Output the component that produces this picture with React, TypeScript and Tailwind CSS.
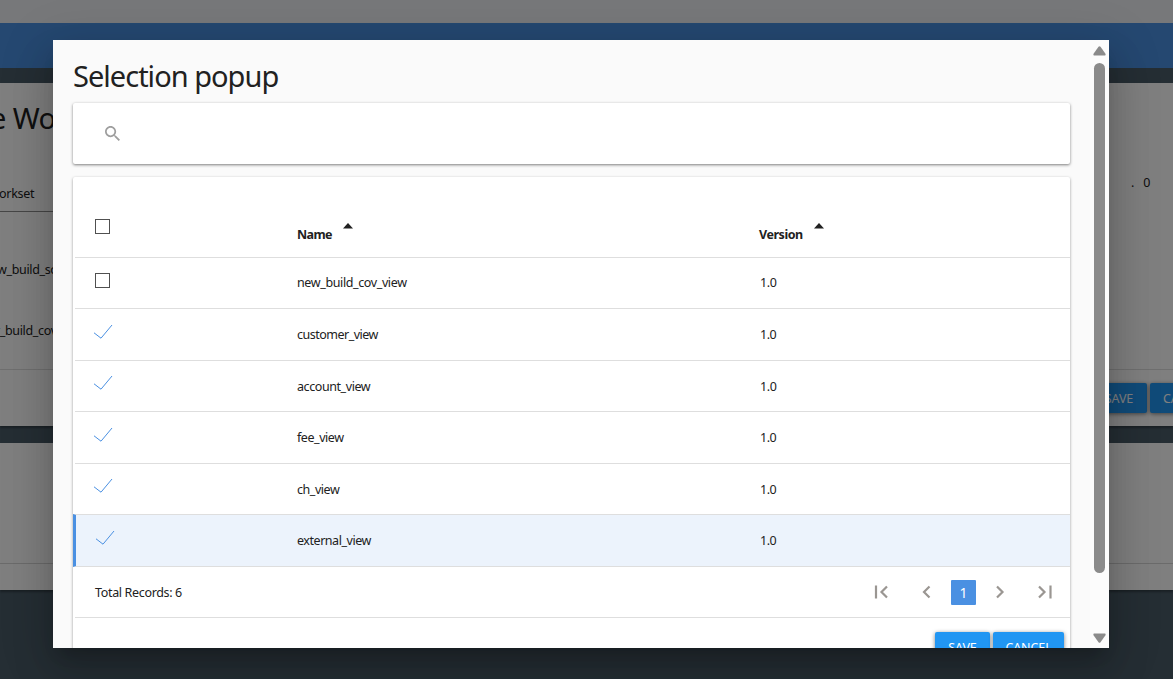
import React from "react";

type Row = { name: string; checked: boolean; height: string; text: string };

const rows: Row[] = [
  { name: "new_build_cov_view", checked: false, height: "h-[51px]", text: "tracking-[-0.38px]" },
  { name: "customer_view", checked: true, height: "h-[52px]", text: "pt-[2px] tracking-[-0.5px]" },
  { name: "account_view", checked: true, height: "h-[51px]", text: "pt-[2px] tracking-[-0.42px]" },
  { name: "fee_view", checked: true, height: "h-[52px]", text: "pt-[2px] tracking-[-0.45px]" },
  { name: "ch_view", checked: true, height: "h-[51px]", text: "pt-[2px] tracking-[-0.45px]" },
];

function CheckMark() {
  return (
    <svg width="20" height="16" viewBox="0 0 20 16" fill="none" stroke="#4a90e2" strokeWidth="1">
      <path d="M1 8.8 L8 14.2 L19 1" />
    </svg>
  );
}

function Box() {
  return <span className="block size-[15px] border border-[#505050]" />;
}

function SortArrow() {
  return (
    <svg width="10" height="6" viewBox="0 0 10 6" className="block" fill="#212121">
      <path d="M0 5.5 L5 0 L10 5.5Z" />
    </svg>
  );
}

function Background() {
  return (
    <div className="flex h-[679px] flex-col overflow-hidden bg-[#4a5c68]">
      <div className="h-[23px] shrink-0 bg-[#eff0f4]" />
      <div className="h-[45px] shrink-0 bg-[#4a90e2]" />
      <div className="mt-[15px] flex h-[343px] shrink-0 justify-between bg-white shadow-[0_2px_2px_rgba(0,0,0,0.3)]">
        <div className="w-[300px] whitespace-nowrap">
          <div className="-ml-[10px] h-[98px] pt-[14px] text-[29px] leading-[42px] tracking-[-0.6px]">e Wo</div>
          <div className="-ml-[1px] h-[31px] border-b border-[#8c8c8c] pt-[4px] leading-[18px] tracking-[-0.3px]">orkset</div>
          <div className="-ml-[3px] h-[109px] pt-[49px] leading-[18px] tracking-[-0.35px]">w_build_source</div>
          <div className="-ml-[5px] h-[49px] pt-[1px] leading-[18px] tracking-[-0.35px]">r_build_cov_view</div>
          <div className="-mt-px h-px bg-[#dedede]" />
        </div>
        <div className="flex w-[100px] flex-col">
          <div className="flex h-[286px] shrink-0 items-start gap-[9px] pl-[58px] pt-[91px] leading-[18px]">
            <span>.</span>
            <span>0</span>
          </div>
          <div className="h-px shrink-0 bg-[#dedede]" />
          <div className="ml-[18px] mt-[13px] flex gap-[3px] text-[12.5px] tracking-[-0.1px] text-white">
            <div className="flex h-[30px] w-[56px] shrink-0 items-center justify-center rounded-[2px] bg-[#2196f3] pt-[2px] shadow-[0_1px_4px_rgba(0,0,0,0.5)]">SAVE</div>
            <div className="flex h-[30px] w-[71px] shrink-0 items-center justify-center rounded-[2px] bg-[#2196f3] pl-[1px] pt-[2px] shadow-[0_1px_4px_rgba(0,0,0,0.5)]">CANCEL</div>
          </div>
        </div>
      </div>
      <div className="mt-[17px] h-[147px] shrink-0 bg-white pt-[120px] shadow-[0_2px_2px_rgba(0,0,0,0.3)]">
        <div className="h-px bg-[#d6d6d6]" />
      </div>
    </div>
  );
}

function Scrollbar() {
  return (
    <div className="flex w-[19px] shrink-0 flex-col items-center bg-[#fcfcfc] pt-[6px]">
      <svg width="13" height="10" viewBox="0 0 13 10" fill="#8b8b8b" className="shrink-0">
        <path d="M5.5 .8 Q6.5 -.2 7.5 .8 L12.3 7.5 Q13.2 9.6 11.8 9.6 H1.2 Q-.2 9.6 .7 7.5Z" />
      </svg>
      <div className="mt-[7px] h-[510px] w-[11px] shrink-0 rounded-full bg-[#8b8b8b]" />
      <svg width="13" height="10" viewBox="0 0 13 10" fill="#8b8b8b" className="mt-[60px] shrink-0 rotate-180">
        <path d="M5.5 .8 Q6.5 -.2 7.5 .8 L12.3 7.5 Q13.2 9.6 11.8 9.6 H1.2 Q-.2 9.6 .7 7.5Z" />
      </svg>
    </div>
  );
}

function Pager() {
  return (
    <div className="flex h-[51px] items-center border-b border-[#dedede] pl-[20px]">
      <span className="w-[779px] pt-[2px] tracking-[-0.34px]">Total Records: 6</span>
      <svg width="14" height="14" viewBox="0 0 14 14" fill="none" stroke="#9a9692" strokeWidth="2.2">
        <path d="M2 0.5V13.5 M13 1.5L7.5 7L13 12.5" />
      </svg>
      <svg width="10" height="14" viewBox="0 0 10 14" fill="none" stroke="#9a9692" strokeWidth="2.2" className="ml-[33px]">
        <path d="M8.5 1.5L3 7L8.5 12.5" />
      </svg>
      <span className="ml-[20px] flex h-[25px] w-[25px] items-center justify-center rounded-[1px] bg-[#4a90e2] text-[14px] text-white">1</span>
      <svg width="10" height="14" viewBox="0 0 10 14" fill="none" stroke="#9a9692" strokeWidth="2.2" className="ml-[19px]">
        <path d="M2 1.5L7.5 7L2 12.5" />
      </svg>
      <svg width="14" height="14" viewBox="0 0 14 14" fill="none" stroke="#9a9692" strokeWidth="2.2" className="ml-[33px]">
        <path d="M1 1.5L6.5 7L1 12.5 M12.5 0.5V13.5" />
      </svg>
    </div>
  );
}

function Dialog() {
  return (
    <div className="flex h-[608px] w-[1056px] overflow-hidden bg-[#fafafa] shadow-[0_11px_15px_-7px_rgba(0,0,0,0.2),0_24px_38px_3px_rgba(0,0,0,0.14),0_9px_46px_8px_rgba(0,0,0,0.12)]">
      <div className="flex w-[1037px] shrink-0 flex-col pl-[20px] pr-[20px]">
        <h1 className="h-[63px] shrink-0 pt-[15px] text-[29px] leading-[42px] tracking-[-0.98px]">Selection popup</h1>
        <div className="flex h-[61px] shrink-0 items-center rounded-[2px] bg-white pl-[32px] shadow-[0_1px_3px_rgba(0,0,0,0.5)]">
          <svg width="15" height="15" viewBox="3 3 17.5 17.5" fill="#9e9e9e">
            <path d="M15.5 14h-.79l-.28-.27C15.41 12.59 16 11.11 16 9.5 16 5.91 13.09 3 9.5 3S3 5.91 3 9.5 5.91 16 9.5 16c1.61 0 3.09-.59 4.23-1.57l.27.28v.79l5 4.99L20.49 19l-4.99-5zm-6 0C7.01 14 5 11.99 5 9.5S7.01 5 9.5 5 14 7.01 14 9.5 11.99 14 9.5 14z" />
          </svg>
        </div>
        <div className="mt-[13px] h-[520px] shrink-0 rounded-[2px] bg-white shadow-[0_1px_3px_rgba(0,0,0,0.4)]">
          <div className="ml-[2px] flex h-[81px] items-start border-b border-[#dedede] pl-[20px] font-bold">
            <div className="w-[202px] pt-[42px]"><Box /></div>
            <div className="flex w-[462px] gap-[11px] pt-[46px]">
              <span className="pt-[3px] leading-[18px] tracking-[-0.6px]">Name</span>
              <SortArrow />
            </div>
            <div className="flex gap-[11px] pt-[46px]">
              <span className="pt-[3px] leading-[18px] tracking-[-0.45px]">Version</span>
              <SortArrow />
            </div>
          </div>
          {rows.map((r) => (
            <div key={r.name} className={`ml-[2px] flex items-center border-b border-[#dedede] pl-[20px] ${r.height}`}>
              <div className="w-[202px] pb-[6px]">{r.checked ? <span className="-ml-[2px] block"><CheckMark /></span> : <Box />}</div>
              <span className={`flex ${r.text}`}>
                <span className="w-[463px]">{r.name}</span>
                <span>1.0</span>
              </span>
            </div>
          ))}
          <div className="-mt-px flex h-[53px] items-center border-y border-l-[3px] border-y-[#dedede] border-l-[#4a90e2] bg-[#ecf3fc] pl-[19px]">
            <div className="w-[202px] pb-[6px]"><CheckMark /></div>
            <span className="w-[463px] pt-[2px] tracking-[-0.46px]">external_view</span>
            <span className="pt-[2px] tracking-[-0.5px]">1.0</span>
          </div>
          <div className="ml-[2px]"><Pager /></div>
          <div className="flex justify-end gap-[3px] pr-[6px] pt-[14px] text-[12.5px] tracking-[-0.1px] text-white">
            <button className="h-[30px] w-[55px] rounded-[2px] bg-[#2196f3] pt-[2px] shadow-[0_1px_4px_rgba(0,0,0,0.5)]">SAVE</button>
            <button className="h-[30px] w-[71px] rounded-[2px] bg-[#2196f3] pt-[2px] shadow-[0_1px_4px_rgba(0,0,0,0.5)]">CANCEL</button>
          </div>
        </div>
      </div>
      <Scrollbar />
    </div>
  );
}

export default function App() {
  return (
    <div className="relative h-[679px] w-[1173px] overflow-hidden font-['Noto_Sans','Open_Sans',sans-serif] text-[12.5px] text-[#212121]">
      <Background />
      <div className="absolute inset-0 overflow-hidden bg-black/50 pl-[53px] pt-[40px]">
        <Dialog />
      </div>
    </div>
  );
}
